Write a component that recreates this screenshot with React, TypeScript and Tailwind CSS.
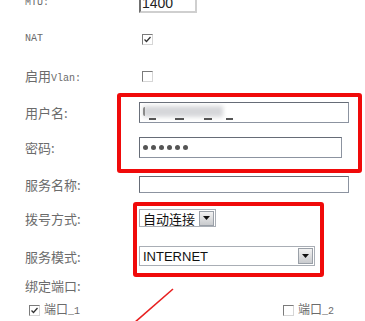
const cjk = { fontFamily: '"Noto Sans CJK SC", "Noto Sans", sans-serif' };
const mono = { fontFamily: '"Liberation Mono", "DejaVu Sans Mono", monospace' };
const arial = { fontFamily: '"Liberation Sans", Arial, sans-serif' };

function Label({ zh, en }: { zh?: string; en?: string }) {
  return (
    <div className="w-[114px] shrink-0 flex items-baseline text-[#6b6b6b]">
      {zh && <span className="text-[13px] leading-none" style={cjk}>{zh}</span>}
      {en && <span className="text-[10px] leading-none" style={mono}>{en}</span>}
    </div>
  );
}

function Check({ checked }: { checked?: boolean }) {
  return (
    <div className="w-[11px] h-[11px] border border-t-[#7b7b7b] border-l-[#7b7b7b] border-r-[#d6d6d6] border-b-[#d6d6d6] bg-white flex items-center justify-center">
      {checked && (
        <svg width="9" height="9" viewBox="0 0 9 9">
          <path d="M1.5 4.5 L3.5 6.5 L7.5 2" fill="none" stroke="#333" strokeWidth="1.3" />
        </svg>
      )}
    </div>
  );
}

function Arrow({ className }: { className: string }) {
  return (
    <div className={`flex items-center justify-center border border-[#9aa0a8] bg-gradient-to-b from-[#f2f2f2] to-[#c9cbce] ${className}`}>
      <svg width="7" height="4" viewBox="0 0 7 4">
        <path d="M0 0 H7 L3.5 4 Z" fill="#111" />
      </svg>
    </div>
  );
}

function TextBox({ w, h, children }: { w: string; h: string; children?: React.ReactNode }) {
  return (
    <div className={`${w} ${h} border border-[#8c93a0] border-t-[#666c77] border-l-[#666c77] bg-white flex items-center pl-[3px]`}>
      {children}
    </div>
  );
}

function Port({ checked, name, width }: { checked?: boolean; name: string; width?: string }) {
  return (
    <div className={`flex items-center ${width ?? ''}`}>
      <Check checked={checked} />
      <div className="ml-[4px] flex items-baseline text-[#6b6b6b]">
        <span className="text-[12px] leading-none" style={cjk}>端口</span>
        <span className="text-[10px] leading-none" style={mono}>{name}</span>
      </div>
    </div>
  );
}

export default function App() {
  return (
    <div className="relative w-[365px] h-[321px] overflow-hidden bg-white">
      <div className="flex flex-col pl-[25px]">
        <div className="flex items-center h-[20px] mt-[-7px]">
          <Label en="MTU:" />
          <div className="w-[58px] h-[20px] border-2 border-t-[#6f6f6f] border-l-[#6f6f6f] border-r-[#cfcfcf] border-b-[#cfcfcf] flex items-center pl-[1px]">
            <span className="text-[14px] leading-none text-[#222]" style={arial}>1400</span>
          </div>
        </div>

        <div className="flex items-center h-[20px] mt-[16px]">
          <Label en="NAT" />
          <div className="pl-[3px]"><Check checked /></div>
        </div>

        <div className="flex items-center h-[21px] mt-[17px]">
          <Label zh="启用" en="Vlan:" />
          <div className="pl-[3px]"><Check /></div>
        </div>

        <div className="flex items-center h-[21px] mt-[15px]">
          <Label zh="用户名:" />
          <TextBox w="w-[210px]" h="h-[21px]">
            <div className="relative w-[92px] h-[15px]">
              <div className="absolute left-[0px] top-[1px] w-[80px] h-[11px] bg-[#d6d7da] blur-[2px]" />
              <div className="absolute left-[0px] top-[2px] w-[2px] h-[9px] bg-[#8a8a8a] rounded-l" />
              <div className="absolute left-[6px] top-[13px] w-[7px] h-[2px] bg-[#555]" />
              <div className="absolute left-[32px] top-[13px] w-[9px] h-[2px] bg-[#555]" />
              <div className="absolute left-[61px] top-[13px] w-[8px] h-[2px] bg-[#555]" />
              <div className="absolute left-[83px] top-[13px] w-[7px] h-[2px] bg-[#555]" />
            </div>
          </TextBox>
        </div>

        <div className="flex items-center h-[21px] mt-[14px]">
          <Label zh="密码:" />
          <TextBox w="w-[203px]" h="h-[21px]">
            <div className="flex gap-[3px]">
              {[0, 1, 2, 3, 4, 5].map((i) => (
                <div key={i} className="w-[5px] h-[5px] rounded-full bg-[#555]" />
              ))}
            </div>
          </TextBox>
        </div>

        <div className="flex items-center h-[17px] mt-[18px]">
          <Label zh="服务名称:" />
          <TextBox w="w-[210px]" h="h-[17px]" />
        </div>

        <div className="flex items-center h-[18px] mt-[16px]">
          <Label zh="拨号方式:" />
          <div className="w-[77px] h-[18px] border border-[#a9aeb5] flex items-center justify-between pl-[3px] pr-[1px] bg-white">
            <span className="text-[13px] leading-none text-[#111]" style={cjk}>自动连接</span>
            <Arrow className="w-[15px] h-[15px]" />
          </div>
        </div>

        <div className="flex items-center h-[20px] mt-[19px]">
          <Label zh="服务模式:" />
          <div className="w-[176px] h-[20px] border border-[#a9aeb5] flex items-center justify-between pl-[3px] pr-[1px] bg-white">
            <span className="text-[13px] leading-none text-[#111]" style={arial}>INTERNET</span>
            <Arrow className="w-[15px] h-[16px]" />
          </div>
        </div>

        <div className="flex items-center h-[16px] mt-[11px]">
          <Label zh="绑定端口:" />
        </div>

        <div className="flex items-center h-[16px] mt-[9px] pl-[4px]">
          <Port checked name="_1" width="w-[254px]" />
          <Port name="_2" />
        </div>
      </div>

      <div className="absolute left-[117px] top-[93px] w-[245px] h-[80px] border-4 border-[#f00a0a] rounded-[3px]" />
      <div className="absolute left-[133px] top-[202px] w-[191px] h-[75px] border-4 border-[#f00a0a] rounded-[3px]" />
      <svg className="absolute left-0 top-0" width="365" height="321" viewBox="0 0 365 321">
        <line x1="173" y1="289" x2="134" y2="323" stroke="#e82020" strokeWidth="1.6" />
      </svg>
    </div>
  );
}
